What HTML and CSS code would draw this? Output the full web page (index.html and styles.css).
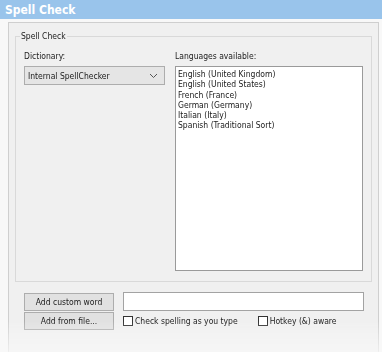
FILE: index.html
```html
<!DOCTYPE html>
<html lang="en">
<head>
    <meta charset="UTF-8">
    <title>Spell Check</title>
    <link rel="stylesheet" href="styles.css">
</head>
<body>
    <div class="titlebar">Spell Check</div>
    <div class="frame">
        <fieldset class="group">
            <legend>Spell Check</legend>
            <div class="cols">
                <div class="coldict">
                    <div class="lbl">Dictionary:</div>
                    <div class="select">
                        <span>Internal SpellChecker</span>
                        <svg width="9" height="6" viewBox="0 0 9 6"><path d="M1 1 L4.5 4.5 L8 1" fill="none" stroke="#555" stroke-width="1"/></svg>
                    </div>
                </div>
                <div class="collang">
                    <div class="lbl">Languages available:</div>
                    <ul class="listbox">
                        <li>English (United Kingdom)</li>
                        <li>English (United States)</li>
                        <li>French (France)</li>
                        <li>German (Germany)</li>
                        <li>Italian (Italy)</li>
                        <li>Spanish (Traditional Sort)</li>
                    </ul>
                </div>
            </div>
        </fieldset>
        <div class="actions">
            <div class="row">
                <button class="btn">Add custom word</button>
                <input type="text" class="word">
            </div>
            <div class="row">
                <button class="btn">Add from file...</button>
                <label class="check"><span class="box"></span>Check spelling as you type</label>
                <label class="check hotkey"><span class="box"></span>Hotkey (&amp;) aware</label>
            </div>
        </div>
    </div>
</body>
</html>
```

FILE: styles.css
```css
*{
    box-sizing: border-box;
}
body{
    margin: 0;
    background-color: #f8f8f8;
    font-family: "DejaVu Sans Condensed", "DejaVu Sans", sans-serif;
    font-size: 8.5px;
    color: #1a1a1a;
    width: 382px;
    height: 352px;
    overflow: hidden;
}
.titlebar{
    height: 19px;
    background-color: #99c4eb;
    color: #fff;
    font-weight: bold;
    font-size: 12px;
    padding-left: 5px;
    line-height: 20px;
}
.frame{
    margin: 3px 0 0 8px;
    width: 371px;
    height: 340px;
    border: 1px solid #cfcfcf;
    border-bottom: none;
    background-color: #f0f0f0;
    padding: 8px 0 0 6px;
    -webkit-mask-image: linear-gradient(to bottom, #000 88%, transparent 100%);
}
.group{
    margin: 0;
    width: 357px;
    min-width: 0;
    border: 1px solid #d9d9d9;
    padding: 0 7px 10px 8px;
}
.group legend{
    margin-left: -4px;
    padding: 0 1px;
    line-height: 11px;
}
.cols{
    display: flex;
    gap: 10px;
    padding-top: 9px;
}
.lbl{
    line-height: 11px;
    margin-bottom: 4px;
}
.coldict{
    width: 141px;
}
.collang{
    width: 188px;
}
.select{
    height: 19px;
    border: 1px solid #adadad;
    background-color: #e5e5e5;
    display: flex;
    align-items: center;
    justify-content: space-between;
    padding: 0 6px 0 3px;
}
.listbox{
    list-style: none;
    margin: 0;
    height: 205px;
    border: 1px solid #9a9a9a;
    background-color: #fff;
    padding: 2px 0 0 2px;
}
.listbox li{
    line-height: 10.3px;
}
.actions{
    padding: 10px 0 0 9px;
    display: flex;
    flex-direction: column;
    gap: 1px;
}
.row{
    display: flex;
    align-items: center;
    gap: 9px;
}
.btn{
    width: 90px;
    height: 18px;
    margin: 0;
    padding: 0;
    border: 1px solid #adadad;
    background-color: #e1e1e1;
    font: inherit;
    color: #1a1a1a;
}
.word{
    width: 241px;
    height: 19px;
    margin: 0;
    border: 1px solid #a3a3a3;
    background-color: #fff;
}
.check{
    display: flex;
    align-items: center;
    gap: 2px;
}
.hotkey{
    margin-left: 11px;
}
.box{
    width: 10px;
    height: 10px;
    border: 1px solid #333;
    background-color: #fff;
}
```
